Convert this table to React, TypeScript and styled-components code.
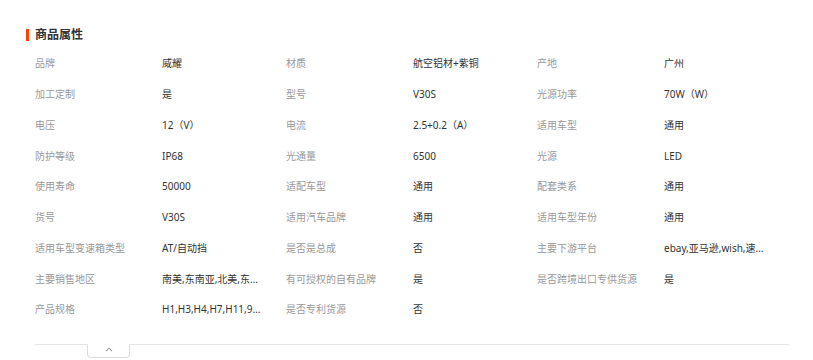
import React from "react";
import styled, { createGlobalStyle } from "styled-components";

const Global = createGlobalStyle`
  html, body { margin: 0; padding: 0; background: #fff; }
  body { font-family: "Noto Sans", "Noto Sans CJK SC", sans-serif; }
`;

const Section = styled.section`
  width: 813px;
  height: 360px;
  box-sizing: border-box;
  padding: 28px 24px 0 26px;
  background: #fff;
`;

const Title = styled.h3`
  margin: 0;
  display: flex;
  align-items: center;
  gap: 6px;
  height: 13px;
  font-size: 12px;
  font-weight: 700;
  color: #333;
  line-height: 13px;
  &::before {
    content: "";
    display: block;
    width: 3px;
    height: 12px;
    background: #ff4400;
  }
`;

const Table = styled.div`
  margin: 7px 0 0 9px;
  display: grid;
  grid-template-columns: 127px 124px 127px 124px 127px 125px;
  grid-auto-rows: 30.75px;
  align-items: center;
  font-size: 10px;
  line-height: 14px;
`;

const Label = styled.div`
  color: #999;
  white-space: nowrap;
`;

const Value = styled.div`
  color: #333;
  white-space: nowrap;
  overflow: hidden;
  text-overflow: ellipsis;
  max-width: 104px;
`;

const Footer = styled.div`
  margin: 19.5px 0 0 9px;
  border-top: 1px solid #e5e5e5;
  height: 14px;
  position: relative;
`;

const Toggle = styled.button`
  position: absolute;
  left: 52px;
  top: -1px;
  width: 43px;
  height: 14px;
  box-sizing: border-box;
  border: 1px solid #dcdcdc;
  border-top: 1px solid #fff;
  border-radius: 0 0 4px 4px;
  background: #fff;
  padding: 0;
  display: flex;
  align-items: flex-start;
  justify-content: center;
  padding-top: 2px;
`;

const rows: [string, string][][] = [
  [["品牌", "威耀"], ["材质", "航空铝材+紫铜"], ["产地", "广州"]],
  [["加工定制", "是"], ["型号", "V30S"], ["光源功率", "70W（W）"]],
  [["电压", "12（V）"], ["电流", "2.5+0.2（A）"], ["适用车型", "通用"]],
  [["防护等级", "IP68"], ["光通量", "6500"], ["光源", "LED"]],
  [["使用寿命", "50000"], ["适配车型", "通用"], ["配套类系", "通用"]],
  [["货号", "V30S"], ["适用汽车品牌", "通用"], ["适用车型年份", "通用"]],
  [["适用车型变速箱类型", "AT/自动挡"], ["是否是总成", "否"], ["主要下游平台", "ebay,亚马逊,wish,速卖通"]],
  [["主要销售地区", "南美,东南亚,北美,东北亚"], ["有可授权的自有品牌", "是"], ["是否跨境出口专供货源", "是"]],
  [["产品规格", "H1,H3,H4,H7,H11,9005,9006"], ["是否专利货源", "否"]],
];

export default function App() {
  return (
    <Section>
      <Global />
      <Title>商品属性</Title>
      <Table>
        {rows.map((r, i) =>
          r.map(([k, v], j) => (
            <React.Fragment key={`${i}-${j}`}>
              <Label>{k}</Label>
              <Value title={v}>{v}</Value>
            </React.Fragment>
          ))
        )}
      </Table>
      <Footer>
        <Toggle aria-label="收起">
          <svg width="8" height="5" viewBox="0 0 8 5">
            <path d="M1 4.2 L4 1.2 L7 4.2" fill="none" stroke="#999" strokeWidth="1.1" />
          </svg>
        </Toggle>
      </Footer>
    </Section>
  );
}
